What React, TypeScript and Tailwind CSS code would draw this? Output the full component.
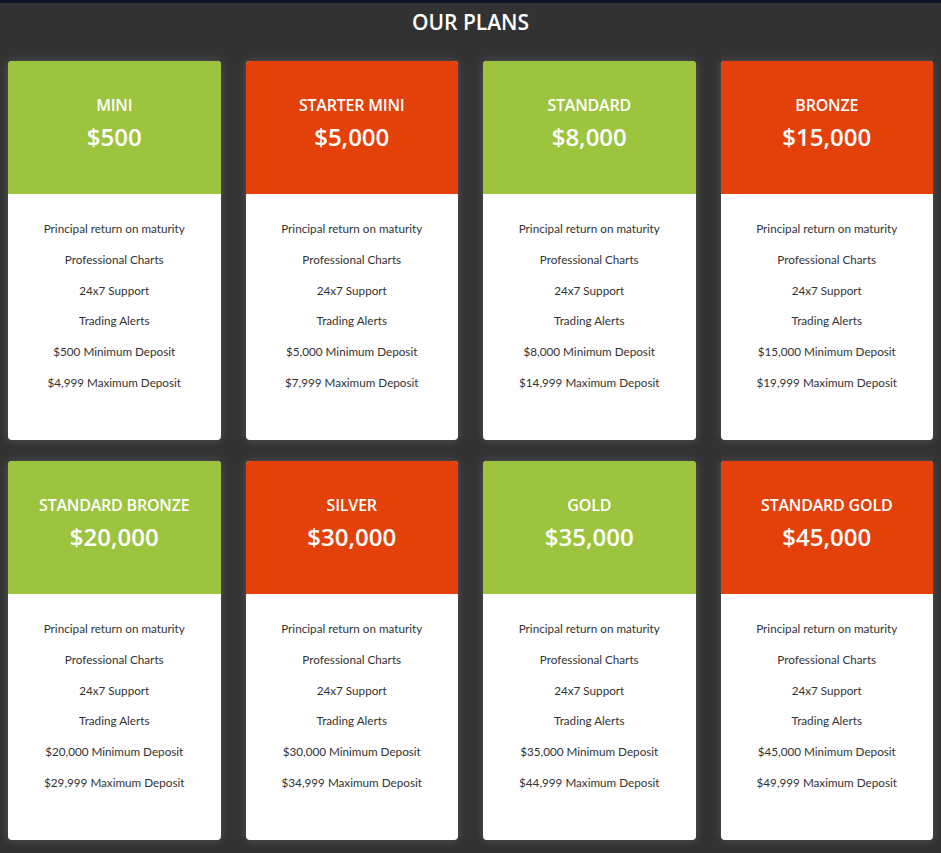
import React from "react";

type Plan = { name: string; price: string; min: string; max: string; color: "green" | "orange" };

const plans: Plan[] = [
  { name: "MINI", price: "$500", min: "$500", max: "$4,999", color: "green" },
  { name: "STARTER MINI", price: "$5,000", min: "$5,000", max: "$7,999", color: "orange" },
  { name: "STANDARD", price: "$8,000", min: "$8,000", max: "$14,999", color: "green" },
  { name: "BRONZE", price: "$15,000", min: "$15,000", max: "$19,999", color: "orange" },
  { name: "STANDARD BRONZE", price: "$20,000", min: "$20,000", max: "$29,999", color: "green" },
  { name: "SILVER", price: "$30,000", min: "$30,000", max: "$34,999", color: "orange" },
  { name: "GOLD", price: "$35,000", min: "$35,000", max: "$44,999", color: "green" },
  { name: "STANDARD GOLD", price: "$45,000", min: "$45,000", max: "$49,999", color: "orange" },
];

function Card({ p }: { p: Plan }) {
  return (
    <div className="flex h-[379px] flex-col overflow-hidden rounded-[4px] bg-white shadow-[0_0_10px_rgba(255,255,255,0.18)]">
      <div
        className={
          (p.color === "green" ? "bg-[#9dc43e]" : "bg-[#e4400a]") +
          " flex h-[133px] flex-col items-center justify-center pb-[10px] text-white"
        }
      >
        <div className="text-[16px] font-semibold leading-[20px] tracking-[-0.2px]">{p.name}</div>
        <div className="mt-[9px] text-[24px] font-semibold leading-[26px]">{p.price}</div>
      </div>
      <div
        className="flex flex-col items-center pt-[25px] text-[11.7px] leading-[18px] text-[#333]"
        style={{ fontFamily: 'Lato, "Open Sans", sans-serif' }}
      >
        <div className="h-[30.8px]">Principal return on maturity</div>
        <div className="h-[30.8px]">Professional Charts</div>
        <div className="h-[30.8px]">24x7 Support</div>
        <div className="h-[30.8px]">Trading Alerts</div>
        <div className="h-[30.8px]">{p.min} Minimum Deposit</div>
        <div className="h-[30.8px]">{p.max} Maximum Deposit</div>
      </div>
    </div>
  );
}

export default function App() {
  return (
    <div
      className="min-h-[853px] w-full bg-[#323232]"
      style={{ fontFamily: '"Open Sans", "Noto Sans", sans-serif' }}
    >
      <div className="h-[3px] bg-[#0d1527]" />
      <h1 className="flex h-[40px] items-center justify-center text-[21px] font-semibold text-white">
        OUR PLANS
      </h1>
      <div className="grid grid-cols-4 gap-x-[25px] gap-y-[21px] px-[8px] pt-[18px]">
        {plans.map((p) => (
          <Card key={p.name} p={p} />
        ))}
      </div>
    </div>
  );
}
